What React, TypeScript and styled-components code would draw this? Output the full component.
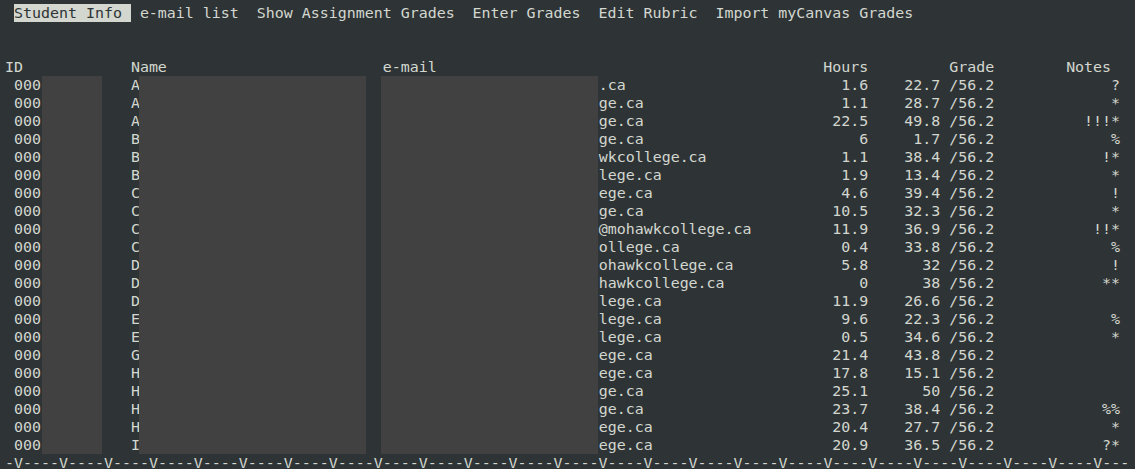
import React from "react";
import styled, { createGlobalStyle } from "styled-components";

const GlobalStyle = createGlobalStyle`
  html, body {
    margin: 0;
    padding: 0;
    height: 100%;
    background: #2e3436;
    overflow: hidden;
  }
`;

const Screen = styled.div`
  box-sizing: border-box;
  width: 1135px;
  height: 469px;
  overflow: hidden;
  background: #2e3436;
  color: #d3d7cf;
  font-family: "DejaVu Sans Mono", "Liberation Mono", monospace;
  font-size: 14.95px;
  line-height: 18px;
  padding: 4px 0 0 5px;
  display: flex;
  flex-direction: column;
`;

const MenuBar = styled.nav`
  display: flex;
  gap: 1ch;
  padding-left: 1ch;
  height: 18px;
  margin-bottom: 36px;
  white-space: pre;
`;

const MenuItem = styled.span<{ $active?: boolean }>`
  padding-right: 1ch;
  background: ${(p) => (p.$active ? "#d3d7cf" : "transparent")};
  color: ${(p) => (p.$active ? "#2e3436" : "#d3d7cf")};
`;

const Table = styled.div`
  display: flex;
  flex-direction: column;
`;

const Row = styled.div`
  display: grid;
  grid-template-columns: 14ch 28ch 49ch 5ch 14ch 14ch;
  height: 18px;
  white-space: pre;
`;

const Cell = styled.div<{ $align?: "left" | "right"; $padLeft?: number; $padRight?: number }>`
  display: flex;
  align-items: stretch;
  justify-content: ${(p) => (p.$align === "right" ? "flex-end" : "flex-start")};
  padding-left: ${(p) => p.$padLeft ?? 0}ch;
  padding-right: ${(p) => p.$padRight ?? 0}ch;
  overflow: visible;
`;

const Redacted = styled.span<{ $width: number; $offset: number; $after?: number }>`
  display: block;
  flex: none;
  width: ${(p) => p.$width}px;
  margin-left: ${(p) => p.$offset}px;
  margin-right: ${(p) => p.$after ?? 0}px;
  background: #414141;
`;

const Ruler = styled.div`
  white-space: pre;
  line-height: 12px;
  padding-top: 3px;
`;

const menu = [
  "Student Info",
  "e-mail list",
  "Show Assignment Grades",
  "Enter Grades",
  "Edit Rubric",
  "Import myCanvas Grades",
];

type Student = [string, string, string, string, string];

const rows: Student[] = [
  ["A", ".ca", "1.6", "22.7", "?"],
  ["A", "ge.ca", "1.1", "28.7", "*"],
  ["A", "ge.ca", "22.5", "49.8", "!!!*"],
  ["B", "ge.ca", "6", "1.7", "%"],
  ["B", "wkcollege.ca", "1.1", "38.4", "!*"],
  ["B", "lege.ca", "1.9", "13.4", "*"],
  ["C", "ege.ca", "4.6", "39.4", "!"],
  ["C", "ge.ca", "10.5", "32.3", "*"],
  ["C", "@mohawkcollege.ca", "11.9", "36.9", "!!*"],
  ["C", "ollege.ca", "0.4", "33.8", "%"],
  ["D", "ohawkcollege.ca", "5.8", "32", "!"],
  ["D", "hawkcollege.ca", "0", "38", "**"],
  ["D", "lege.ca", "11.9", "26.6", ""],
  ["E", "lege.ca", "9.6", "22.3", "%"],
  ["E", "lege.ca", "0.5", "34.6", "*"],
  ["G", "ege.ca", "21.4", "43.8", ""],
  ["H", "ege.ca", "17.8", "15.1", ""],
  ["H", "ge.ca", "25.1", "50", ""],
  ["H", "ge.ca", "23.7", "38.4", "%%"],
  ["H", "ege.ca", "20.4", "27.7", "*"],
  ["I", "ege.ca", "20.9", "36.5", "?*"],
];

const ruler = Array.from({ length: 125 }, (_, i) => (i % 5 === 1 ? "V" : "-")).join("");

export default function App() {
  return (
    <>
      <GlobalStyle />
      <Screen>
        <MenuBar>
          {menu.map((m, i) => (
            <MenuItem key={m} $active={i === 0}>
              {m}
            </MenuItem>
          ))}
        </MenuBar>
        <Table>
          <Row>
            <Cell>ID</Cell>
            <Cell>Name</Cell>
            <Cell>e-mail</Cell>
            <Cell $align="right">Hours</Cell>
            <Cell $align="right">Grade</Cell>
            <Cell $align="right" $padRight={1}>
              Notes
            </Cell>
          </Row>
          {rows.map(([initial, email, hours, grade, notes], i) => (
            <Row key={i}>
              <Cell $padLeft={1}>
                000
                <Redacted $width={60} $offset={1} />
              </Cell>
              <Cell>
                {initial}
                <Redacted $width={227} $offset={-1} />
              </Cell>
              <Cell>
                <Redacted $width={217} $offset={-2} $after={1} />
                {email}
              </Cell>
              <Cell $align="right">{hours}</Cell>
              <Cell $align="right">{`${grade} /56.2`}</Cell>
              <Cell $align="right">{notes}</Cell>
            </Row>
          ))}
        </Table>
        <Ruler>{ruler}</Ruler>
      </Screen>
    </>
  );
}
